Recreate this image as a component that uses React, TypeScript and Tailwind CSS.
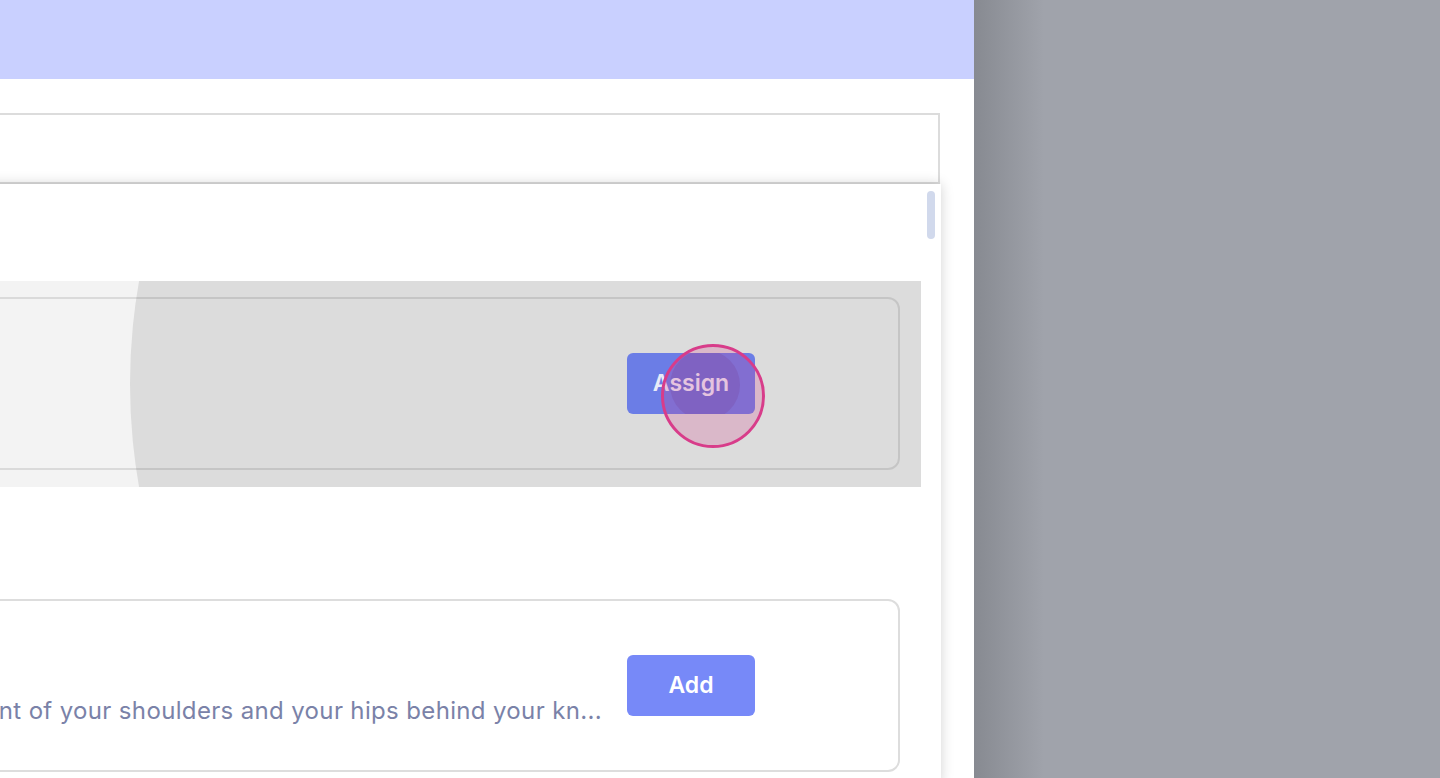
import React from "react";

const font = { fontFamily: "Inter, 'Noto Sans', sans-serif" };

function AssignButton() {
  return (
    <button className="relative h-[61px] w-[128px] shrink-0 overflow-hidden rounded-md bg-[#6b7de6] text-[23px] font-semibold text-[#e9ebf8]">
      <span className="absolute left-[43px] top-[-3px] h-[70px] w-[70px] rounded-full bg-[#5a3f9a]/25" />
      <span className="relative">Assign</span>
    </button>
  );
}

function AddButton() {
  return (
    <button className="h-[61px] w-[128px] shrink-0 rounded-md bg-[#7789f8] text-[23px] font-semibold text-white">
      Add
    </button>
  );
}

export default function App() {
  return (
    <div className="relative flex h-screen w-full overflow-hidden" style={font}>
      <div className="relative w-[974px] shrink-0 overflow-hidden bg-white">
        <div className="h-[79px] bg-[#c9d0ff]" />

        <div className="-ml-[300px] mr-[34px] mt-[34px] h-[71px] border-2 border-[#dcdcdc] bg-white" />

        <div className="relative -ml-[300px] mr-[33px] h-[600px] bg-white shadow-[0_0_12px_rgba(0,0,0,0.18)]">
          <div className="absolute right-[6px] top-[7px] h-12 w-2 rounded-full bg-[#d1d9ec]" />

          <div className="pr-[20px] pt-[97px]">
            <div className="relative h-[206px] overflow-hidden bg-[#f3f3f3] pt-4">
              <div className="absolute right-[-389px] top-[-487px] h-[1180px] w-[1180px] rounded-full bg-[#dcdcdc]" />
              <div className="relative mr-[21px] flex h-[173px] items-center justify-end rounded-xl border-2 border-black/10 pr-[143px]">
                <AssignButton />
              </div>
            </div>

            <div className="pt-[112px]">
              <div className="mr-[21px] flex h-[173px] items-center justify-end gap-[25px] rounded-xl border-2 border-[#dddddd] pr-[143px]">
                <div className="mt-[50px] whitespace-nowrap text-[24px] leading-[34px] tracking-[0.35px] text-[#7a82a8]">
                  nt of your shoulders and your hips behind your kn...
                </div>
                <AddButton />
              </div>
            </div>
          </div>
        </div>
      </div>

      <div className="flex-1 bg-[linear-gradient(to_right,#878a91,#a0a3ab_70px)]" />

      <div className="absolute left-[661px] top-[344px] h-[104px] w-[104px] rounded-full border-[3px] border-[#d83c8a] bg-[rgba(214,60,136,0.22)]" />
    </div>
  );
}
